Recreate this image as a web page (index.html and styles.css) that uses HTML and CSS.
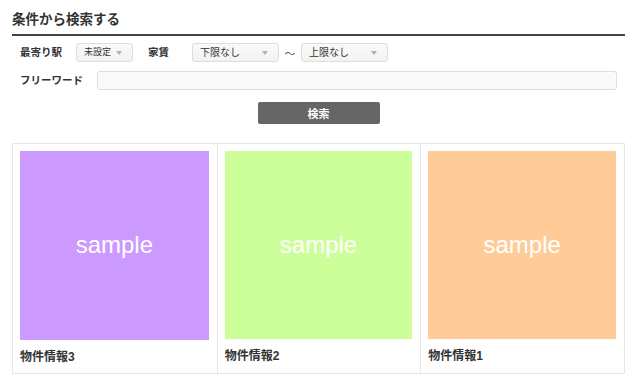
FILE: index.html
```html
<!DOCTYPE html>
<html lang="ja">
<head>
    <meta charset="UTF-8">
    <meta name="viewport" content="width=device-width, initial-scale=1.0">
    <title>条件から検索する</title>
    <link rel="stylesheet" href="styles.css">
</head>
<body>
    <div class="wrap">
        <h2 class="title">条件から検索する</h2>

        <form class="search">
            <div class="row">
                <span class="label label-station">最寄り駅</span>
                <div class="select select-station">未設定</div>
                <span class="label label-rent">家賃</span>
                <div class="select select-rent">下限なし</div>
                <span class="tilde">〜</span>
                <div class="select select-rent">上限なし</div>
            </div>
            <div class="row">
                <span class="label label-word">フリーワード</span>
                <input class="keyword" type="text">
            </div>
            <div class="actions">
                <button type="button" class="btn">検索</button>
            </div>
        </form>

        <div class="cards">
            <div class="card">
                <div class="thumb purple">sample</div>
                <p class="name">物件情報3</p>
            </div>
            <div class="card">
                <div class="thumb green">sample</div>
                <p class="name">物件情報2</p>
            </div>
            <div class="card">
                <div class="thumb orange">sample</div>
                <p class="name">物件情報1</p>
            </div>
        </div>
    </div>
</body>
</html>
```

FILE: styles.css
```css
body {
    margin: 0;
    font-family: "Liberation Sans", "Noto Sans CJK JP", sans-serif;
    color: #333;
    background: #fff;
}
.wrap {
    width: 613px;
    margin-left: 12px;
    padding-top: 10px;
}
.title {
    margin: 0;
    font-size: 13.5px;
    line-height: 20px;
    font-weight: bold;
    padding-bottom: 4px;
    border-bottom: 2px solid #444;
}
.search { margin-top: 7px; }
.row {
    display: flex;
    align-items: center;
    height: 19px;
    padding-left: 8px;
}
.row + .row { margin-top: 9px; }
.label {
    font-size: 10.5px;
    font-weight: bold;
    line-height: 19px;
}
.label-station { width: 56px; }
.label-rent { width: 44px; margin-left: 15px; }
.label-word { width: 77px; }
.select {
    position: relative;
    box-sizing: border-box;
    height: 19px;
    line-height: 17px;
    padding-left: 7px;
    font-size: 10px;
    border: 1px solid #ddd;
    border-radius: 3px;
    background: linear-gradient(#fafafa, #f2f2f2);
}
.select::after {
    content: "";
    position: absolute;
    right: 10px;
    top: 7px;
    border-left: 3px solid transparent;
    border-right: 3px solid transparent;
    border-top: 4px solid #b0b0b0;
}
.select-station { width: 57px; font-size: 9px; }
.select-rent { width: 87px; }
.tilde {
    width: 22px;
    text-align: center;
    font-size: 11px;
    color: #555;
}
.keyword {
    box-sizing: border-box;
    width: 520px;
    height: 19px;
    margin: 0;
    border: 1px solid #ddd;
    border-radius: 3px;
    background: #fafafa;
}
.actions {
    margin-top: 12px;
    text-align: center;
}
.btn {
    width: 122px;
    height: 22px;
    border: none;
    border-radius: 2px;
    background: #666;
    color: #fff;
    font-family: inherit;
    font-size: 11px;
    font-weight: bold;
    cursor: pointer;
}
.cards {
    margin-top: 19px;
    display: grid;
    grid-template-columns: repeat(3, 1fr);
    border: 1px solid #e6e6e6;
}
.card {
    padding: 7px 8px 7px 7px;
}
.card + .card { border-left: 1px solid #e6e6e6; }
.thumb {
    aspect-ratio: 1 / 1;
    display: flex;
    align-items: center;
    justify-content: center;
    color: #fff;
    font-size: 24px;
}
.purple { background: #cc99ff; }
.green { background: #ccff99; }
.orange { background: #ffcc99; }
.name {
    margin: 8px 0 0;
    font-size: 12px;
    font-weight: bold;
    line-height: 18px;
}
```
